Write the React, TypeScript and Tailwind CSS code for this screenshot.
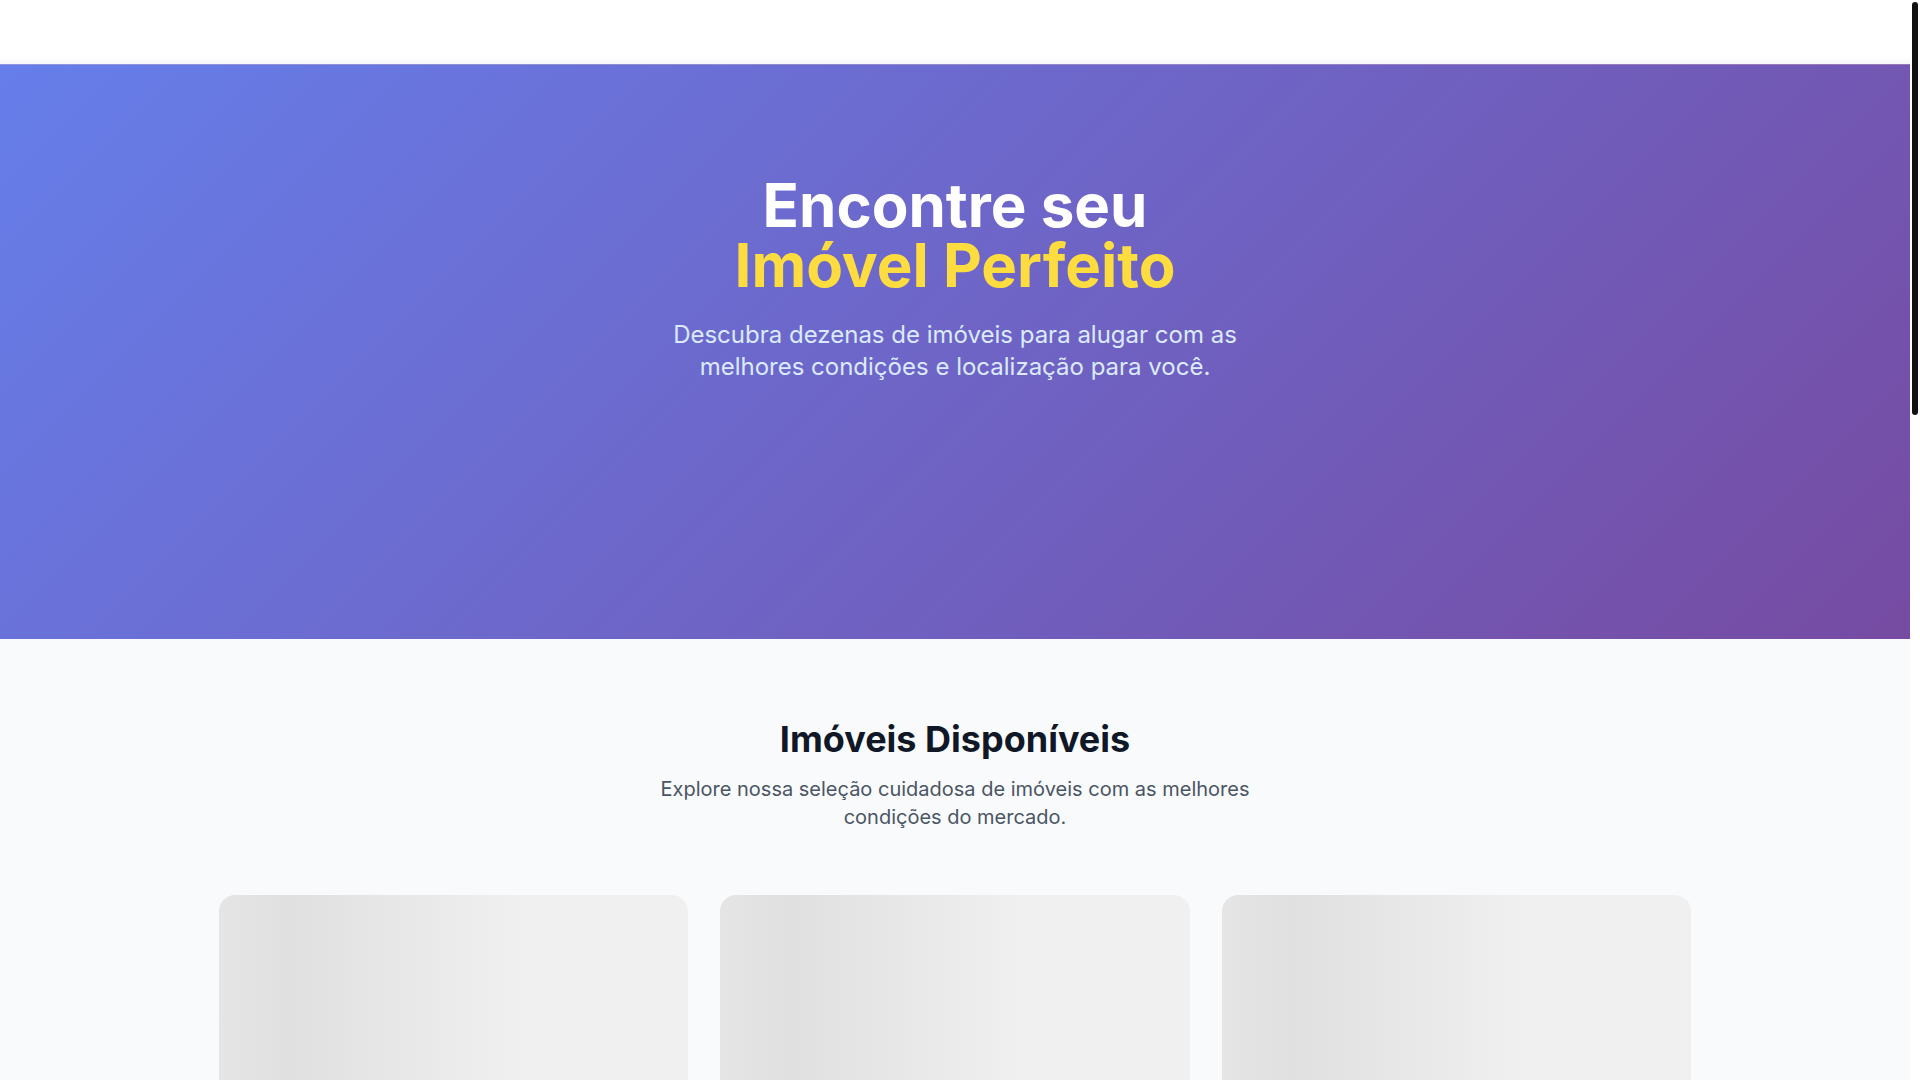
import React from "react"

function SkeletonCard() {
  return (
    <div className="rounded-2xl overflow-hidden bg-white">
      <div className="h-64 bg-[linear-gradient(90deg,#e5e5e5_0%,#e0e0e0_15%,#f0f0f0_65%,#f0f0f0_100%)]" />
      <div className="p-6 space-y-3">
        <div className="h-5 w-3/4 rounded bg-gray-200" />
        <div className="h-4 w-1/2 rounded bg-gray-200" />
        <div className="h-4 w-2/3 rounded bg-gray-200" />
        <div className="h-10 w-full rounded-lg bg-gray-200 mt-4" />
      </div>
    </div>
  )
}

export default function App() {
  return (
    <div className="bg-white pr-[10px] font-['Inter',sans-serif]">
      {/* Header */}
      <header className="h-16 bg-white shadow-[inset_0_-10px_10px_-10px_rgba(90,90,160,0.12)]" />

      {/* Hero */}
      <section className="h-[575px] border-t border-white/25 bg-[linear-gradient(135deg,#667eea_0%,#764ba2_100%)] pt-[110px] text-center">
        <h1 className="text-6xl font-bold leading-none text-white mb-6">
          Encontre seu
          <span className="block text-[#fddc40]">Imóvel Perfeito</span>
        </h1>
        <p className="text-2xl leading-8 text-blue-100 max-w-2xl mx-auto">
          Descubra dezenas de imóveis para alugar com as melhores condições e localização para você.
        </p>
      </section>

      {/* Imóveis */}
      <section className="bg-gray-50 py-20">
        <div className="container mx-auto px-8">
          <div className="text-center mb-16">
            <h2 className="text-4xl font-bold text-gray-900 mb-4">Imóveis Disponíveis</h2>
            <p className="text-xl text-gray-600 max-w-2xl mx-auto">
              Explore nossa seleção cuidadosa de imóveis com as melhores condições do mercado.
            </p>
          </div>
          <div className="grid grid-cols-3 gap-8">
            {Array.from({ length: 9 }).map((_, i) => (
              <SkeletonCard key={i} />
            ))}
          </div>
        </div>
      </section>

      {/* Footer */}
      <footer className="bg-gray-900 min-h-[420px]" />

      {/* scrollbar */}
      <div className="fixed right-0 top-0 h-screen w-[10px] bg-white">
        <div className="ml-[2px] mt-[2px] h-[413px] w-[6px] rounded-[3px] bg-[#111111]" />
      </div>
    </div>
  )
}
